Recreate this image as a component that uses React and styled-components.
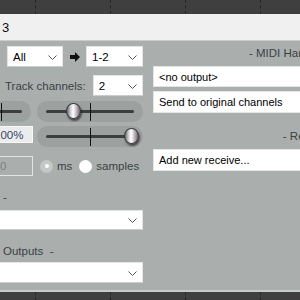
import React from "react";
import styled, { createGlobalStyle } from "styled-components";

const Global = createGlobalStyle`
  html, body {
    margin: 0;
    padding: 0;
    overflow: hidden;
  }
  body {
    font-family: "Liberation Sans", Arial, sans-serif;
  }
`;

const Page = styled.div`
  width: 300px;
  height: 300px;
  display: flex;
  flex-direction: column;
  overflow: hidden;
  background: #aaafad;
`;

const GridBand = styled.div`
  height: ${props => props.h}px;
  flex-shrink: 0;
  display: flex;
  background: #3f3f3f;
`;
const GridCell = styled.div`
  width: ${props => props.w}px;
  flex-shrink: 0;
  box-sizing: border-box;
  border-right: 1px dashed #262626;
`;

const TitleBar = styled.div`
  height: 26px;
  flex-shrink: 0;
  display: flex;
  align-items: center;
  padding-left: 2px;
  background: #f0f0f0;
  border-bottom: 1px solid #c9cccb;
  font-size: 13px;
  color: #111;
`;

const Panel = styled.div`
  height: 249px;
  flex-shrink: 0;
  display: flex;
  gap: 10px;
  overflow: hidden;
`;

const BottomEdge = styled.div`
  height: 2px;
  flex-shrink: 0;
  background: #c7cbc9;
`;

const LeftCol = styled.div`
  width: 143px;
  flex-shrink: 0;
  display: flex;
  flex-direction: column;
  overflow: hidden;
`;

const RightCol = styled.div`
  width: 321px;
  flex-shrink: 0;
  display: flex;
  flex-direction: column;
`;

const Row = styled.div`
  display: flex;
  align-items: ${props => props.align || "center"};
  height: ${props => props.h || 21}px;
  margin-top: ${props => props.mt || 0}px;
  padding-left: ${props => props.pl || 0}px;
`;

const SelectBox = styled.div`
  position: relative;
  box-sizing: border-box;
  width: ${props => (props.w ? props.w + "px" : "auto")};
  height: ${props => props.h || 21}px;
  margin-top: ${props => props.mt || 0}px;
  margin-left: ${props => props.ml || 0}px;
  flex-shrink: 0;
  display: flex;
  align-items: center;
  padding: 0 16px 0 5px;
  background: #fff;
  border: 1px solid #e4e6e5;
  border-bottom-color: #c9cccb;
  font-size: 11.5px;
  color: #000;
  white-space: nowrap;
  overflow: hidden;
`;

const Chevron = styled.svg`
  position: absolute;
  right: 5px;
  top: 50%;
  margin-top: -2px;
`;

const ArrowSlot = styled.div`
  width: 23px;
  display: flex;
  justify-content: center;
  align-items: center;
`;

const Label = styled.div`
  font-size: 11.5px;
  color: #3b3f45;
  white-space: nowrap;
  padding-left: ${props => props.pl || 0}px;
  margin-top: ${props => props.mt || 0}px;
  height: 14px;
  line-height: 14px;
  text-align: ${props => props.align || "left"};
`;

const Pill = styled.div`
  position: relative;
  box-sizing: border-box;
  width: ${props => props.w}px;
  height: 21px;
  margin-left: ${props => props.ml || 0}px;
  flex-shrink: 0;
  display: flex;
  align-items: center;
  padding: 0 9px;
  background: #9ca19f;
  border-radius: 11px;
`;
const Track = styled.div`
  flex: 1;
  height: 3px;
  border-radius: 2px;
  background: #3c3f3e;
`;
const CenterTick = styled.div`
  position: absolute;
  left: 50%;
  top: 2px;
  bottom: 1px;
  width: 1px;
  background: #111;
`;
const Knob = styled.div`
  position: absolute;
  top: 2px;
  width: 15px;
  height: 16px;
  box-sizing: border-box;
  border-radius: 50%;
  border: 1px solid #3a3a3c;
  background: linear-gradient(
    90deg,
    #6a6a70 0%,
    #d9d6dc 30%,
    #ffffff 48%,
    #d2c3ca 68%,
    #6d6a70 100%
  );
  box-shadow: 1px 2px 2px rgba(0, 0, 0, 0.55);
`;

const TextField = styled.div`
  box-sizing: border-box;
  width: 43px;
  height: ${props => props.h}px;
  margin-left: -10px;
  flex-shrink: 0;
  display: flex;
  align-items: center;
  padding-left: ${props => props.pad}px;
  font-size: 11.5px;
  background: ${props => (props.disabled ? "#aaafad" : "#ececec")};
  border: 1px solid ${props => (props.disabled ? "#e2e4e3" : "#f8f8f8")};
  color: ${props => (props.disabled ? "#7c8180" : "#34476a")};
  white-space: nowrap;
  overflow: hidden;
`;

const Radio = styled.div`
  width: 13px;
  height: 13px;
  margin-left: 7px;
  border-radius: 50%;
  flex-shrink: 0;
  display: flex;
  align-items: center;
  justify-content: center;
  background: ${props => (props.checked ? "#c4c8c7" : "#ffffff")};
`;
const RadioDot = styled.div`
  width: 4px;
  height: 4px;
  border-radius: 50%;
  background: #fff;
`;
const RadioText = styled.span`
  margin-left: 4px;
  font-size: 11.5px;
  color: #3b3f45;
`;

const Field = styled.div`
  box-sizing: border-box;
  height: ${props => props.h || 22}px;
  margin-top: ${props => props.mt || 0}px;
  display: flex;
  align-items: center;
  padding-left: 5px;
  background: #fff;
  border: 1px solid #e4e6e5;
  font-size: 11px;
  color: #000;
  white-space: nowrap;
`;

const grid = [36, 75, 75, 75, 75];

function Band({ h }) {
  return (
    <GridBand h={h}>
      {grid.map((w, i) => (
        <GridCell key={i} w={w} />
      ))}
    </GridBand>
  );
}

function Select({ children, ...rest }) {
  return (
    <SelectBox {...rest}>
      {children}
      <Chevron width="9" height="5" viewBox="0 0 9 5">
        <polyline points="0.5,0.5 4.5,4.5 8.5,0.5" fill="none" stroke="#555" strokeWidth="1" />
      </Chevron>
    </SelectBox>
  );
}

function Slider({ w, ml, value }) {
  const trackW = w - 18;
  const left = 9 + value * trackW - 7.5;
  return (
    <Pill w={w} ml={ml}>
      <Track />
      <CenterTick />
      <Knob style={{ left }} />
    </Pill>
  );
}

export default function App() {
  return (
    <Page>
      <Global />
      <Band h={14} />
      <TitleBar>3</TitleBar>
      <Panel>
        <LeftCol>
          <Row mt={5} pl={7}>
            <Select w={56}>All</Select>
            <ArrowSlot>
              <svg width="10" height="10" viewBox="0 0 10 10">
                <polygon points="0,3 5,3 5,0 10,5 5,10 5,7 0,7" fill="#111" />
              </svg>
            </ArrowSlot>
            <Select w={57}>1-2</Select>
          </Row>
          <Row mt={8}>
            <Label pl={5}>Track channels:</Label>
            <Select w={50} ml={7}>2</Select>
          </Row>
          <Row mt={5}>
            <Slider w={60} ml={-29} value={0.1} />
            <Slider w={106} ml={6} value={0.315} />
          </Row>
          <Row mt={4} align="flex-start">
            <TextField h={17} pad={3}>100%</TextField>
            <Slider w={106} ml={4} value={0.966} />
          </Row>
          <Row mt={9} h={20}>
            <TextField h={20} pad={9} disabled>
              0
            </TextField>
            <Radio checked>
              <RadioDot />
            </Radio>
            <RadioText>ms</RadioText>
            <Radio />
            <RadioText>samples</RadioText>
          </Row>
          <Label pl={3} mt={14}>-</Label>
          <Select h={20} mt={6} ml={-4} />
          <Label pl={3} mt={14}>Outputs&nbsp;&nbsp;-</Label>
          <Select h={21} mt={4} ml={-4} />
        </LeftCol>
        <RightCol>
          <Label align="center" mt={5}>- MIDI Hardware Output -</Label>
          <Field h={21} mt={6}>&lt;no output&gt;</Field>
          <Field mt={4}>Send to original channels</Field>
          <Label align="center" mt={16}>- Receives -</Label>
          <Field mt={6}>Add new receive...</Field>
        </RightCol>
      </Panel>
      <BottomEdge />
      <Band h={8} />
    </Page>
  );
}
